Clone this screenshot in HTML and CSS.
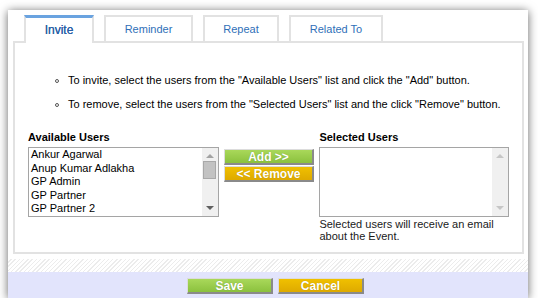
FILE: index.html
```html
<!DOCTYPE html>
<html lang="en">
<head>
    <meta charset="UTF-8">
    <title>Invite Users</title>
    <link rel="stylesheet" href="styles.css">
</head>
<body>
    <div class="dialog">
        <div class="tabs">
            <div class="tab active">Invite</div>
            <div class="tab tab-reminder">Reminder</div>
            <div class="tab tab-repeat">Repeat</div>
            <div class="tab tab-related">Related To</div>
        </div>
        <div class="panel">
            <ul class="hints">
                <li>To invite, select the users from the "Available Users" list and click the "Add" button.</li>
                <li>To remove, select the users from the "Selected Users" list and the click "Remove" button.</li>
            </ul>
            <div class="picker">
                <div class="column">
                    <div class="label">Available Users</div>
                    <div class="listbox">
                        <div class="items">
                            <div>Ankur Agarwal</div>
                            <div>Anup Kumar Adlakha</div>
                            <div>GP Admin</div>
                            <div>GP Partner</div>
                            <div>GP Partner 2</div>
                        </div>
                        <div class="scrollbar">
                            <span class="arrow up"></span>
                            <span class="thumb"></span>
                            <span class="arrow down"></span>
                        </div>
                    </div>
                </div>
                <div class="moves">
                    <button class="button green">Add &gt;&gt;</button>
                    <button class="button yellow">&lt;&lt; Remove</button>
                </div>
                <div class="column">
                    <div class="label">Selected Users</div>
                    <div class="listbox">
                        <div class="items"></div>
                        <div class="scrollbar disabled">
                            <span class="arrow up"></span>
                            <span class="arrow down"></span>
                        </div>
                    </div>
                    <div class="note">Selected users will receive an email about the Event.</div>
                </div>
            </div>
        </div>
        <div class="hatch"></div>
        <div class="footer">
            <button class="button green wide">Save</button>
            <button class="button yellow wide">Cancel</button>
        </div>
    </div>
</body>
</html>
```

FILE: styles.css
```css
body {
    margin: 0;
    background-color: #ffffff;
    font-family: "Liberation Sans", Arial, sans-serif;
    font-size: 11px;
    color: #000000;
}

.dialog {
    width: 520px;
    height: 288px;
    margin: 10px 0 0 8px;
    background-color: #ffffff;
    box-shadow: 0 1px 9px rgba(0, 0, 0, 0.6);
    display: flex;
    flex-direction: column;
}

.tabs {
    display: flex;
    gap: 10px;
    padding: 5px 0 0 16px;
    height: 26px;
    position: relative;
    z-index: 1;
}

.tab {
    box-sizing: border-box;
    height: 26px;
    border: 2px solid #e2e2e2;
    border-bottom: none;
    background-color: #ffffff;
    color: #2f6fb8;
    text-align: center;
    line-height: 24px;
}

.tab.active {
    width: 70px;
    height: 28px;
    border-top: 3px solid #6aa3e0;
    color: #2a60a6;
    font-size: 12px;
    line-height: 25px;
    text-shadow: 0 0 0.4px #2a60a6;
}

.tab-reminder { width: 89px; }
.tab-repeat { width: 76px; }
.tab-related { width: 94px; }

.panel {
    height: 213px;
    box-sizing: border-box;
    margin: 0 4px 0 5px;
    border: 2px solid #e2e2e2;
    padding: 0 13px;
}

.hints {
    list-style: none;
    margin: 31px 0 0 0;
    padding: 0 0 0 40px;
}

.hints li {
    position: relative;
    line-height: 13px;
    margin-bottom: 11px;
}

.hints li:last-child {
    margin-bottom: 0;
}

.hints li::before {
    content: "";
    position: absolute;
    left: -13px;
    top: 5px;
    width: 2px;
    height: 2px;
    border: 1px solid #555555;
    border-radius: 50%;
}

.picker {
    display: flex;
    gap: 5px;
    margin-top: 20px;
}

.column {
    width: 191px;
}

.column + .moves + .column {
    width: 190px;
}

.label {
    font-weight: bold;
    line-height: 13px;
    margin-bottom: 3px;
}

.listbox {
    box-sizing: border-box;
    height: 70px;
    border: 1px solid #a5a5a5;
    display: flex;
    background-color: #ffffff;
}

.items {
    flex: 1;
    font-size: 11px;
    line-height: 13.6px;
    padding-left: 2px;
    overflow: hidden;
}

.scrollbar {
    width: 16px;
    background-color: #f0f0f0;
    display: flex;
    flex-direction: column;
    align-items: center;
}

.arrow {
    width: 0;
    height: 0;
    border-left: 4px solid transparent;
    border-right: 4px solid transparent;
    margin: 6px 0;
}

.arrow.up {
    border-bottom: 4px solid #a3a3a3;
}

.arrow.down {
    border-top: 4px solid #606060;
    margin-top: auto;
}

.scrollbar.disabled .arrow.up {
    border-bottom-color: #c6c6c6;
}

.scrollbar.disabled .arrow.down {
    border-top-color: #c6c6c6;
}

.thumb {
    box-sizing: border-box;
    width: 13px;
    height: 18px;
    margin-top: -3px;
    background-color: #c2c2c2;
    border: 1px solid #a8a8a8;
}

.moves {
    width: 91px;
    padding-top: 18px;
    display: flex;
    flex-direction: column;
    gap: 1px;
}

.button {
    box-sizing: border-box;
    height: 16px;
    padding: 0;
    border: 1px solid #dcdcdc;
    border-right: 2px solid #8a8a8a;
    border-bottom: 2px solid #8a8a8a;
    font-family: "Liberation Sans", Arial, sans-serif;
    font-size: 12px;
    font-weight: bold;
    line-height: 12px;
    color: #ffffff;
    text-shadow: 0 0 1px rgba(0, 0, 0, 0.25);
    cursor: pointer;
}

.green {
    background: linear-gradient(#a9d85a, #8bc13e);
}

.yellow {
    background: linear-gradient(#f0c000, #deaa00);
}

.note {
    margin-top: 1px;
    line-height: 12px;
    color: #1a1a1a;
}

.hatch {
    height: 13px;
    margin-top: 5px;
    background: repeating-linear-gradient(-45deg, #ffffff 0, #ffffff 2px, #ececec 2px, #ececec 3px);
}

.footer {
    flex: 1;
    background-color: #e2e4fc;
    display: flex;
    gap: 5px;
    padding: 6px 0 0 179px;
}

.wide {
    width: 86px;
}
```
